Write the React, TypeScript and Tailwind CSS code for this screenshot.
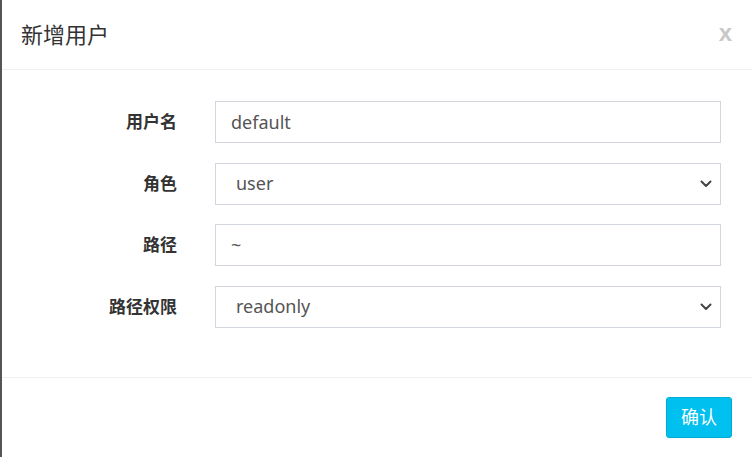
import React from 'react'

const font = { fontFamily: '"Noto Sans", "Noto Sans CJK SC", sans-serif' }

const Chevron = () => (
  <svg
    className="pointer-events-none absolute right-[9px] top-1/2 -translate-y-1/2"
    width="12"
    height="8"
    viewBox="0 0 12 8"
    fill="none"
  >
    <path d="M1.5 1.5 L6 6 L10.5 1.5" stroke="#444" strokeWidth="2" strokeLinecap="round" strokeLinejoin="round" />
  </svg>
)

const Row = ({ label, children }: { label: string; children: React.ReactNode }) => (
  <div className="flex items-center h-[42px]">
    <label className="w-[175px] text-right text-[17px] font-bold text-[#333]">{label}</label>
    <div className="ml-[38px] w-[506px] relative">{children}</div>
  </div>
)

const inputCls =
  'w-full h-[42px] border border-[#d2d6de] bg-white px-[15px] text-[18px] text-[#555] outline-none'

const App = () => {
  return (
    <div className="w-[752px] h-[457px] bg-[#555] pl-[2px] overflow-hidden" style={font}>
      <div className="w-[750px] h-[457px] bg-white flex flex-col">
        <div className="h-[70px] flex items-center justify-between pl-[19px] pr-[20px] border-b border-[#f0f0f0]">
          <h4 className="text-[22px] text-[#333] font-normal">新增用户</h4>
          <button
            className="text-[24px] font-bold text-[#c8c8c8] leading-none -mt-[4px]"
            style={{ fontFamily: '"Liberation Sans", sans-serif' }}
          >
            x
          </button>
        </div>
        <div className="flex-1 pt-[31px] flex flex-col gap-[19.5px] border-b border-[#f0f0f0]">
          <Row label="用户名">
            <input className={inputCls} defaultValue="default" />
          </Row>
          <Row label="角色">
            <select className={inputCls + ' appearance-none pl-[20px]'} defaultValue="user">
              <option value="user">user</option>
              <option value="admin">admin</option>
            </select>
            <Chevron />
          </Row>
          <Row label="路径">
            <input className={inputCls} defaultValue="~" />
          </Row>
          <Row label="路径权限">
            <select className={inputCls + ' appearance-none pl-[20px]'} defaultValue="readonly">
              <option value="readonly">readonly</option>
              <option value="readwrite">readwrite</option>
            </select>
            <Chevron />
          </Row>
        </div>
        <div className="h-[79px] flex items-center justify-end pr-[20px]">
          <button className="w-[66px] h-[41px] rounded-[3px] bg-[#00c0ef] border border-[#00acd6] text-white text-[18px]">
            确认
          </button>
        </div>
      </div>
    </div>
  )
}

export default App
